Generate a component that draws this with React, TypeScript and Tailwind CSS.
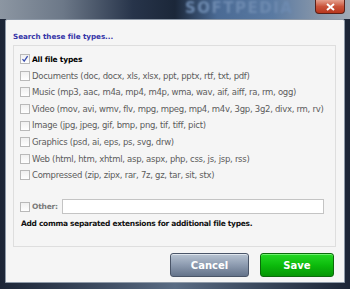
import React from "react";

const types = [
  "Documents (doc, docx, xls, xlsx, ppt, pptx, rtf, txt, pdf)",
  "Music (mp3, aac, m4a, mp4, m4p, wma, wav, aif, aiff, ra, rm, ogg)",
  "Video (mov, avi, wmv, flv, mpg, mpeg, mp4, m4v, 3gp, 3g2, divx, rm, rv)",
  "Image (jpg, jpeg, gif, bmp, png, tif, tiff, pict)",
  "Graphics (psd, ai, eps, ps, svg, drw)",
  "Web (html, htm, xhtml, asp, aspx, php, css, js, jsp, rss)",
  "Compressed (zip, zipx, rar, 7z, gz, tar, sit, stx)",
];

const Box = ({ checked = false }: { checked?: boolean }) => (
  <span className="w-[10px] h-[10px] shrink-0 border border-[#b9b9b9] bg-gradient-to-b from-[#f0f0f0] to-white flex items-center justify-center">
    {checked && (
      <svg width="8" height="8" viewBox="0 0 8 8">
        <path d="M1.5 4.2 L3.2 6.2 L6.6 1.2" stroke="#3b4fb0" strokeWidth="1.3" fill="none" />
      </svg>
    )}
  </span>
);

export default function App() {
  return (
    <div
      className="w-[350px] h-[289px] flex flex-col overflow-hidden bg-gradient-to-r from-[#1c2536] via-[#5a6c84] to-[#1c2536] px-[5px] pb-[6px] relative"
      style={{ fontFamily: '"DejaVu Sans", Tahoma, sans-serif' }}
    >
      {/* title bar */}
      <div className="h-[19px] -mx-[5px] shrink-0 relative bg-[linear-gradient(90deg,#8c96a2_0%,#6c7888_18%,#27344a_38%,#1b2739_50%,#4a6a94_62%,#5a7aa2_78%,#8a98aa_92%,#a0aab6_100%)]">
        <span className="absolute left-[185px] top-0 text-[15px] leading-[17px] font-bold tracking-[1.5px] text-[#6d8ab0] blur-[1px] select-none whitespace-nowrap">
          SOFTPEDIA
        </span>
        <div className="absolute right-[5px] top-0 w-[30px] h-[14px] rounded-b-[4px] border border-t-0 border-[#5a2018] bg-gradient-to-b from-[#e4a08e] via-[#c9533a] to-[#b8361c] flex items-center justify-center">
          <svg width="9" height="8" viewBox="0 0 9 8">
            <path d="M1 1 L8 7 M8 1 L1 7" stroke="#fff" strokeWidth="2" />
          </svg>
        </div>
      </div>

      {/* client area */}
      <div className="flex-1 bg-[#f5f5f5] border border-[#8f9aa8] rounded-t-[2px] flex flex-col pl-[7px] pr-[8px]">
        <div className="h-[25px] flex items-end pb-[5px] text-[7.2px] font-bold text-[#3535a8] leading-none tracking-[-0.05px]">
          Search these file types...
        </div>

        <div className="h-[202px] border border-[#dedede] flex flex-col pl-[6px] pt-[5px]">
          <div className="h-[16.6px] flex items-center gap-[1px]">
            <Box checked />
            <span className="text-[7.5px] font-bold text-black leading-none ml-[1px] tracking-[-0.2px]">All file types</span>
          </div>
          {types.map((t) => (
            <div key={t} className="h-[16.6px] flex items-center gap-[1px]">
              <Box />
              <span className="text-[8.5px] text-[#5c5c5c] leading-none ml-[1px] tracking-[-0.28px] whitespace-nowrap">{t}</span>
            </div>
          ))}
          <div className="h-[15px]" />
          <div className="h-[16px] flex items-center">
            <Box />
            <span className="text-[7.5px] font-bold text-[#7a7a7a] leading-none ml-[2px] w-[30px] tracking-[-0.2px]">Other:</span>
            <div className="h-[15px] w-[262px] bg-white border border-[#c4c4c4]" />
          </div>
          <div className="h-[18px] flex items-center pl-[1px] text-[7.5px] font-bold text-[#111] leading-none tracking-[-0.3px] whitespace-nowrap">
            Add comma separated extensions for additional file types.
          </div>
        </div>

        <div className="flex justify-end gap-[11px] mt-[6px] pr-[2px]">
          <button className="w-[79px] h-[24px] rounded-[3px] border border-[#4a5568] bg-gradient-to-b from-[#b8c4d2] via-[#8d9bb0] to-[#64738a] text-white text-[10px] font-bold shadow-[inset_0_1px_0_#dfe6ee]">
            Cancel
          </button>
          <button className="w-[74px] h-[24px] rounded-[3px] border border-[#0a6a0a] bg-gradient-to-b from-[#22d822] via-[#0cbc0c] to-[#059605] text-white text-[10px] font-bold shadow-[inset_0_1px_0_#6ef06e]">
            Save
          </button>
        </div>
      </div>
    </div>
  );
}
